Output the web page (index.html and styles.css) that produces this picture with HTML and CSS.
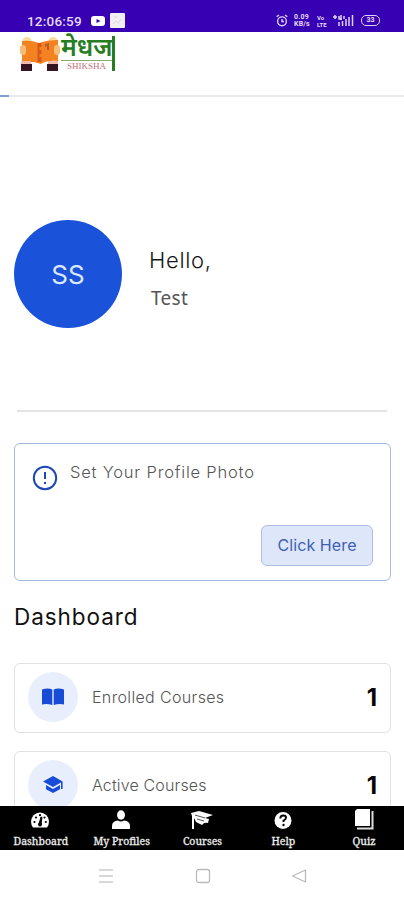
FILE: index.html
```html
<!DOCTYPE html>
<html lang="en">
<head>
<meta charset="utf-8">
<meta name="viewport" content="width=device-width, initial-scale=1">
<title>Dashboard</title>
<link rel="stylesheet" href="styles.css">
</head>
<body>
<div class="phone">
  <div class="status">
    <span class="time">12:06:59</span>
    <svg class="video" width="14" height="10" viewBox="0 0 14 10"><rect width="14" height="10" rx="3" fill="#fff"/><path d="M5.5 3l4 2-4 2z" fill="#3700b3"/></svg>
    <svg class="picture" width="15" height="15" viewBox="0 0 15 15"><rect width="15" height="15" rx="1" fill="#f1eff3"/><path d="M3 11l3-3 2 2 3-4M4 4h4" fill="none" stroke="#dddbd5"/></svg>
    <svg class="alarm" width="12" height="13" viewBox="0 0 12 13" fill="none" stroke="#ddd2fa" stroke-width="1.4"><circle cx="6" cy="7.3" r="4.4"/><path d="M6 5v2.5h2M.7 2.8L3 1M11.3 2.8L9 1"/></svg>
    <span class="tiny speed">0.09<br>KB/s</span>
    <span class="tiny volte">Vo<br>LTE</span>
    <svg class="signal" width="22" height="13" viewBox="0 0 22 13"><path d="M1 3h4M3 1v4M7 2v3h3M9 1v5M12 2v3M7 8v4M10.5 7v5M14 5v7M17 3v9M20.5 1v11" fill="none" stroke="#ddd2fa" stroke-width="1.5"/></svg>
    <span class="battery">33</span>
  </div>
  <header class="header">
    <svg class="mark" width="40" height="37" viewBox="0 0 40 37">
      <circle cx="7" cy="6" r="5" fill="#f4dfa0"/><circle cx="33" cy="6" r="5" fill="#f4dfa0"/>
      <path d="M2 5q9-1 17 2 8-3 19-3v21q-11-1-17 3-8-3-19-2z" fill="#f58220"/>
      <path d="M17.5 7h4v4h-2v3h2v4h-2v3h2v5h-4z" fill="#d3591e"/><path d="M25 8l4-1v7h-2v-4l-2 1z" fill="#b85a2c"/>
      <rect y="9" width="6" height="10" rx="3" fill="#f5bd76"/><rect x="34" y="9" width="6" height="10" rx="3" fill="#f5bd76"/>
      <path d="M1 25h10v3H1zM28 25h10v3H28z" fill="#f4b9ab"/>
      <path d="M1 28h11v7H1zM27 28h11v7H27z" fill="#351322"/>
    </svg>
    <div class="wordmark"><span class="hindi" lang="hi">मेधज</span><span class="shiksha">SHIKSHA</span></div>
  </header>
  <div class="progress"><div class="bar"></div></div>
  <main class="content">
    <section class="profile">
      <div class="avatar"><span>SS</span></div>
      <div><div class="hello">Hello,</div><div class="name">Test</div></div>
    </section>
    <hr class="rule">
    <section class="notice">
      <div class="notice-row">
        <svg width="26" height="26" viewBox="0 0 26 26" fill="none" stroke="#1d47b5" stroke-width="2"><circle cx="13" cy="13" r="11.2"/><path d="M13 7v7M13 17v2"/></svg>
        <span class="notice-text">Set Your Profile Photo</span>
      </div>
      <button class="button">Click Here</button>
    </section>
    <h1 class="title">Dashboard</h1>
    <section class="card">
      <div class="disc"><svg width="22" height="18" viewBox="0 0 22 18" fill="#174dd6"><path d="M0 1.500Q6-.5 10.300 1.500V17Q5 15.500 0 16.500zM11.700 1.500Q16-.5 22 1.500v15q-5-1-10.300.5z"/></svg></div>
      <span class="label">Enrolled Courses</span><b class="count">1</b>
    </section>
    <section class="card">
      <div class="disc"><svg width="22" height="18" viewBox="0 0 22 18" fill="#174dd6"><path d="M11 0L1 5.500 11 11l8-4.400V13h1.600V5.500zM4 9v4.200L11 17l7-3.800V9l-7 4z"/></svg></div>
      <span class="label active">Active Courses</span><b class="count">1</b>
    </section>
  </main>
  <nav class="tabs">
    <div class="tab"><svg width="20" height="20" viewBox="0 0 20 20"><path d="M3 17.500Q1 15 1 11.500a9 9 0 0118 0q0 3.500-2 6z" fill="#fff"/><path d="M9 14l2-7 1 .3-1 7z" stroke="#000"/><circle cx="10" cy="14.500" r="2"/><circle cx="4.500" cy="12" r="1.100"/><circle cx="6" cy="7.500" r="1.100"/><circle cx="10" cy="5.200" r="1.100"/><circle cx="14.500" cy="7.500" r="1.100"/><circle cx="15.800" cy="12" r="1.100"/></svg><span>Dashboard</span></div>
    <div class="tab"><svg width="20" height="20" viewBox="0 0 20 20" fill="#fff"><ellipse cx="10" cy="5" rx="4" ry="4.700"/><path d="M1 19v-3q0-5 6-5.500 3 2 6 0 6 .5 6 5.500v3z"/></svg><span>My Profiles</span></div>
    <div class="tab"><svg width="24" height="20" viewBox="0 0 24 20"><path d="M1 3l8-2 14 4-8 3 4 1-1 4q-4-1-6 2l-6-3-2-4v11H2V6z" fill="#fff"/><path d="M5 5l10 3M7 9l7 2" stroke="#555"/></svg><span>Courses</span></div>
    <div class="tab"><svg width="20" height="20" viewBox="0 0 20 20"><circle cx="10" cy="10.500" r="8.500" fill="#fff"/><path d="M7.300 8.500q0-3 3-3 2.700 0 2.700 2.300 0 1.500-2.500 2.700v1.500" fill="none" stroke="#000" stroke-width="1.900"/><circle cx="10.500" cy="15" r="1.200"/></svg><span>Help</span></div>
    <div class="tab"><svg width="20" height="22" viewBox="0 0 20 22"><path d="M3 0h13v17H1V2z" fill="#fff"/><path d="M18.500 2v17.500H3" fill="none" stroke="#ddd" stroke-width="2"/></svg><span>Quiz</span></div>
  </nav>
  <div class="system">
    <svg width="16" height="16" viewBox="0 0 16 16" stroke="#ccc" stroke-width="1.400"><path d="M1 2h14M1 8h14M1 14h14"/></svg>
    <svg width="16" height="16" viewBox="0 0 16 16" fill="none" stroke="#bbb" stroke-width="1.300"><rect x="1.500" y="1.500" width="13" height="13" rx="2.500"/></svg>
    <svg width="16" height="16" viewBox="0 0 16 16" fill="none" stroke="#bbb" stroke-width="1.300" stroke-linejoin="round"><path d="M14.500 2v12L1.500 8z"/></svg>
  </div>
</div>
</body>
</html>
```
FILE: styles.css
```css
* { box-sizing: border-box; }
body { margin: 0; background: #fff; font-family: Inter, "Liberation Sans", sans-serif; }
.phone { display: flex; flex-direction: column; width: 404px; height: 900px; overflow: hidden; white-space: nowrap; }
svg { display: block; flex: none; }
.status { display: flex; align-items: center; height: 32px; flex: none; padding: 9px 24px 0 27px; background: #3700b3; color: #e4dbfb; }
.time { width: 64px; font: 500 13.5px/16px Roboto, sans-serif; letter-spacing: .2px; }
.picture { margin-left: 5px; }
.alarm { margin-left: 151px; }
.tiny { font: 700 7px/7px Roboto, sans-serif; }
.speed { width: 18px; margin-left: 6px; letter-spacing: .2px; }
.volte { width: 10px; margin-left: 5px; font-size: 6px; }
.signal { margin-left: 5px; }
.battery { width: 19px; height: 11px; margin-left: auto; border: 1.5px solid #ddd2fa; border-radius: 5px; font: 700 7px/8px Roboto, sans-serif; text-align: center; }
.header { display: flex; flex: none; height: 63px; padding: 4px 0 0 20px; }
.wordmark { width: 54px; height: 35px; margin-left: 1px; border-right: 3px solid #267d22; }
.hindi { display: block; height: 25px; border-bottom: 1px solid #8aa876; color: #267d22; font: 600 25px/28px "Noto Sans Devanagari", "Noto Sans", sans-serif; }
.shiksha { display: block; margin-left: 6px; color: #bd7078; font: 9px/11px "Liberation Serif", serif; }
.progress { flex: none; height: 2px; background: #ebebeb; }
.bar { width: 9px; height: 2px; background: #7d9fd2; }
.content { flex: 1; min-height: 0; overflow: hidden; padding: 123px 13px 0 14px; }
.profile { display: flex; align-items: flex-start; height: 190px; gap: 28px; }
.avatar { display: flex; align-items: center; justify-content: center; width: 108px; height: 108px; border-radius: 50%; background: #1a53da; color: #dce8ff; font-size: 26px; }
.hello { margin: 26px 0 0 -1px; font-weight: 300; font-size: 22px; line-height: 28px; letter-spacing: .7px; color: #161616; }
.name { margin: 12px 0 0 1px; font: 19px/24px "Noto Sans", sans-serif; letter-spacing: .3px; color: #555; }
.rule { height: 2px; margin: 0 4px 0 3px; border: 0; background: #e3e3e3; }
.notice { height: 138px; margin-top: 31px; padding: 18px 17px 18px 18px; border: 1.5px solid #a3bbd9; border-radius: 6px; }
.notice-row { display: flex; gap: 12px; height: 63px; }
.notice-row svg { margin-top: 3px; margin-left: -1px; }
.notice-text { font-weight: 300; font-size: 16.5px; line-height: 21px; letter-spacing: .8px; color: #555; }
.button { display: block; width: 112px; height: 41px; margin-left: auto; padding: 0 0 2px; border: 1px solid #aebde3; border-radius: 6px; background: #dee6f9; color: #405fb5; font: 400 16px Inter, sans-serif; letter-spacing: .1px; }
.title { margin: 22px 0 32px; font-weight: 400; font-size: 22.5px; line-height: 28px; letter-spacing: .95px; color: #111; }
.card { display: flex; align-items: center; height: 70px; margin-bottom: 18px; padding: 0 13px 2px; border: 1.5px solid #e1e1e1; border-radius: 6px; }
.disc { display: flex; align-items: center; justify-content: center; width: 50px; height: 50px; border-radius: 50%; background: #e8eefc; }
.label { margin-left: 14px; font-weight: 300; font-size: 16px; letter-spacing: .35px; color: #555; }
.active { letter-spacing: .15px; }
.count { margin-left: auto; font-size: 24px; font-weight: 700; color: #050505; }
.tabs { display: grid; grid-template-columns: repeat(5, 1fr); flex: none; height: 44px; background: #000; color: #eee; }
.tab { display: flex; flex-direction: column; align-items: center; height: 44px; padding-top: 3px; font: 400 10.5px/14px "Noto Serif", "Liberation Serif", serif; -webkit-text-stroke: .3px #eee; }
.tab svg { height: 22px; }
.tab span { margin: 3px 0 0 1px; }
.system { display: flex; flex: none; align-items: center; height: 50px; padding: 1px 97px 0 98px; justify-content: space-between; }
```
